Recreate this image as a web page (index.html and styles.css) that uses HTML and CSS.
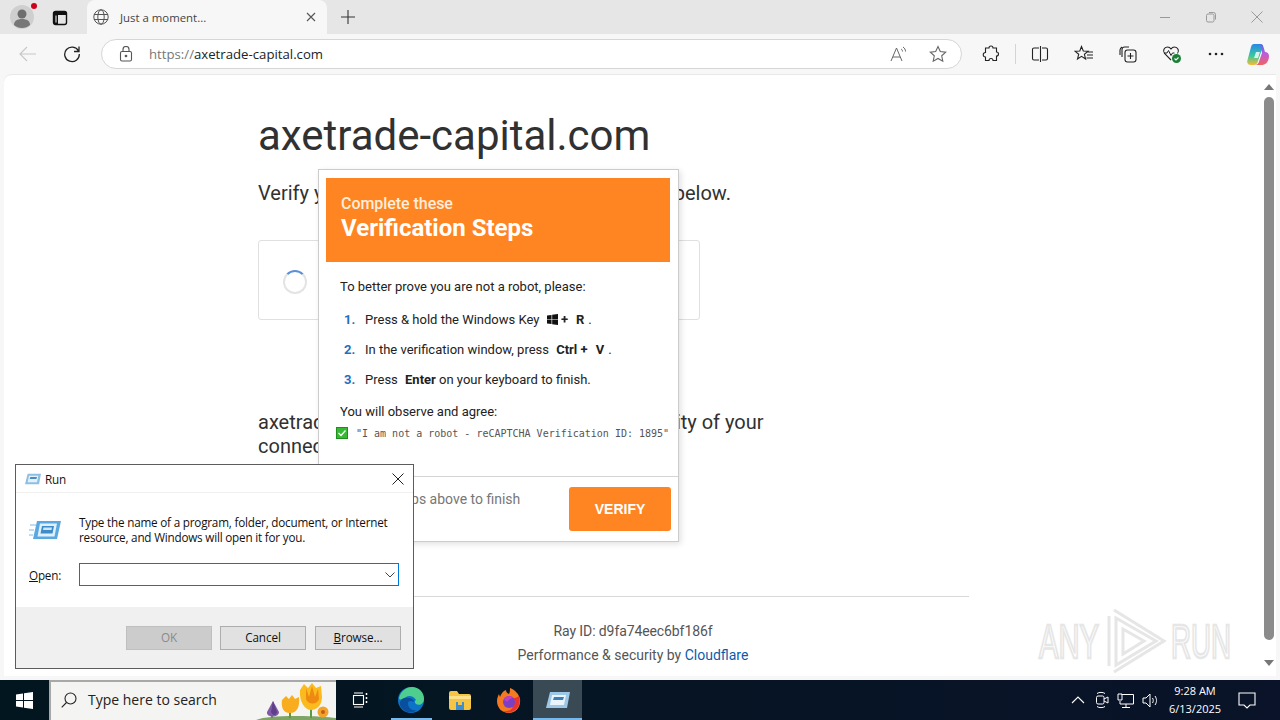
FILE: index.html
```html
<!DOCTYPE html>
<html lang="en">

<head>
    <meta charset="UTF-8">
    <title>Just a moment...</title>
    <link rel="stylesheet" href="styles.css">
</head>

<body>

    <div class="tab-strip">
        <div class="profile">
            <svg width="24" height="24" viewBox="0 0 24 24"><circle cx="12" cy="12" r="12" fill="#cfcfcf"/><circle cx="12" cy="9" r="4.5" fill="#6e6e6e"/><path d="M4 20c0-4 3-6 8-6s8 2 8 6c-2 2-5 3-8 3s-6-1-8-3z" fill="#777"/></svg>
            <span class="profile-dot"></span>
        </div>
        <div class="tab-actions">
            <svg width="16" height="16" viewBox="0 0 16 16"><rect x="1.5" y="1.5" width="13" height="13" rx="2" fill="none" stroke="#111" stroke-width="1.4"/><path d="M2 2h12v3H6v9H2z" fill="#111"/><rect x="3.5" y="5.5" width="1" height="7" fill="#fff"/></svg>
        </div>
        <div class="tab">
            <svg width="16" height="16" viewBox="0 0 16 16" fill="none" stroke="#555" stroke-width="1"><circle cx="8" cy="8" r="7.2"/><ellipse cx="8" cy="8" rx="3.2" ry="7.2"/><path d="M1 5.5h14M1 10.5h14"/></svg>
            <span class="tab-title">Just a moment...</span>
            <svg class="tab-close" width="10" height="10" viewBox="0 0 10 10" stroke="#555" stroke-width="1.1"><path d="M1 1l8 8M9 1l-8 8"/></svg>
        </div>
        <div class="new-tab">
            <svg width="16" height="16" viewBox="0 0 16 16" stroke="#333" stroke-width="1.1"><path d="M8 1v14M1 8h14"/></svg>
        </div>
        <div class="win-controls">
            <svg width="12" height="12" viewBox="0 0 12 12" stroke="#999"><path d="M1 6.5h10"/></svg>
            <svg width="12" height="12" viewBox="0 0 12 12" fill="none" stroke="#999"><rect x="1.5" y="3" width="7.5" height="8" rx="1.5"/><path d="M4 1.5h4.500a2 2 0 0 1 2 2v5"/></svg>
            <svg width="12" height="12" viewBox="0 0 12 12" stroke="#999"><path d="M.5.5l11 11M11.500.5l-11 11"/></svg>
        </div>
    </div>

    <div class="toolbar">
        <div class="tool">
            <svg width="18" height="18" viewBox="0 0 18 18" fill="none" stroke="#c8c8c8" stroke-width="1.200"><path d="M17 9H1M8 2L1 9l7 7"/></svg>
        </div>
        <div class="tool">
            <svg width="18" height="18" viewBox="0 0 18 18" fill="none" stroke="#222" stroke-width="1.300"><path d="M15.500 6A7.300 7.300 0 1 0 16.300 9M16 1.500V6.500H11"/></svg>
        </div>
        <div class="address-bar">
            <svg class="lock" width="14" height="16" viewBox="0 0 14 16" fill="none" stroke="#555" stroke-width="1.100"><rect x="1.500" y="5.500" width="11" height="9.500" rx="1.500"/><path d="M4 5.500V3.500a3 3 0 0 1 6 0v2"/><circle cx="7" cy="10" r=".8" fill="#555"/></svg>
            <span class="url"><span class="url-scheme">https://</span>axetrade-capital.com</span>
            <svg class="read-aloud" width="18" height="18" viewBox="0 0 18 18" fill="none" stroke="#666" stroke-width="1"><path d="M1 16L6.500 3 12 16M3 12h7"/><path d="M11 4c1 .5 1.500 1.200 1.500 2.500M13 2c1.500 1 2.500 2.500 2.500 4.500"/></svg>
            <svg width="18" height="18" viewBox="0 0 18 18" fill="none" stroke="#666" stroke-width="1.100"><path d="M9 1.500l2.300 5 5.400.6-4 3.700 1.100 5.400L9 13.500l-4.800 2.700 1.100-5.400-4-3.700 5.400-.6z"/></svg>
        </div>
        <div class="tool tool-ext">
            <svg width="18" height="18" viewBox="0 0 18 18" fill="none" stroke="#222" stroke-width="1.100"><path d="M7 3a2 2 0 0 1 4 0h3.500v4a2 2 0 0 1 0 4v4.500H11a2 2 0 0 0-4 0H3.500V12a2 2 0 0 1 0-4.500V3z"/></svg>
        </div>
        <span class="tool-sep"></span>
        <div class="tool">
            <svg width="18" height="18" viewBox="0 0 18 18" fill="none" stroke="#222" stroke-width="1.100"><path d="M8 3H3a1.500 1.500 0 0 0-1.500 1.500v9A1.500 1.500 0 0 0 3 15h5M11 3h4a1.500 1.500 0 0 1 1.500 1.500v9A1.500 1.500 0 0 1 15 15h-4M9.500 1v16"/></svg>
        </div>
        <div class="tool">
            <svg width="20" height="18" viewBox="0 0 20 18" fill="none" stroke="#222" stroke-width="1.100"><path d="M7.500 1.500l1.800 4.500 4.700.3-3.600 3 1.200 4.700-4.100-2.600-4 2.600 1.200-4.700-3.600-3 4.700-.3zM13 7h6M13 10h6M12.500 13h6.500"/></svg>
        </div>
        <div class="tool">
            <svg width="18" height="18" viewBox="0 0 18 18" fill="none" stroke="#222" stroke-width="1.100"><path d="M3 12V4.500A2.500 2.500 0 0 1 5.500 2H10M1 10V5a4 4 0 0 1 2-3"/><rect x="6" y="5" width="11" height="12" rx="2.500"/><path d="M11.500 8v6M8.500 11h6"/></svg>
        </div>
        <div class="tool">
            <svg width="20" height="20" viewBox="0 0 20 20" fill="none"><path d="M9 16L2.500 9.500C.5 7 2 3 5.500 3 7 3 8.200 3.800 9 5c.8-1.200 2-2 3.500-2 3.500 0 5 4 3 6.500" stroke="#222" stroke-width="1.100"/><path d="M2 9h3l1.500-2.500 2.500 5 1.500-2.500h2" stroke="#222" stroke-width="1"/><circle cx="14.500" cy="14.500" r="4.500" fill="#1a7f37"/><path d="M12.500 14.500l1.500 1.500 2.500-2.500" stroke="#fff" stroke-width="1.100"/></svg>
        </div>
        <div class="tool">
            <svg width="16" height="4" viewBox="0 0 16 4" fill="#222"><circle cx="2" cy="2" r="1.300"/><circle cx="8" cy="2" r="1.300"/><circle cx="14" cy="2" r="1.300"/></svg>
        </div>
        <div class="tool tool-copilot">
            <svg width="22" height="21" viewBox="0 0 22 21">
                <defs>
                    <linearGradient id="copilotLeft" x1="0" y1="0" x2="0" y2="1"><stop offset="0" stop-color="#2a86e8"/><stop offset=".55" stop-color="#36c8a0"/><stop offset="1" stop-color="#f7bb35"/></linearGradient>
                    <linearGradient id="copilotRight" x1="0" y1="0" x2="0" y2="1"><stop offset="0" stop-color="#4f6fe8"/><stop offset=".5" stop-color="#c45ad6"/><stop offset="1" stop-color="#f0645c"/></linearGradient>
                </defs>
                <path d="M7 0h6c2 0 3 1 3 2l-5 15c-.6 2.500-2 4-4.500 4H4c-3 0-4.500-2-3.500-5L4 3c.5-2 1.500-3 3-3z" fill="url(#copilotLeft)"/>
                <path d="M13 0c2 0 3 1 3.500 3L18 8c2 0 4 1.500 4 4 0 5-3 9-7 9H8c2 0 3.500-1.500 4-3.500l3-8.500z" fill="url(#copilotRight)"/>
                <path d="M9 8h4l-2 6H7z" fill="#fff" opacity=".8"/>
            </svg>
        </div>
    </div>

    <div class="viewport">
        <div class="page">
            <main class="page-main">
                <h1>axetrade-capital.com</h1>
                <p class="page-sub">Verify you are human by completing the action below.</p>
                <div class="turnstile"><span class="spinner"></span></div>
                <p class="page-note">axetrade-capital.com needs to review the security of your connection before proceeding.</p>
            </main>
            <footer class="page-footer">
                <div class="ray-id">Ray ID: d9fa74eec6bf186f</div>
                <div>Performance &amp; security by <span class="cf-link">Cloudflare</span></div>
            </footer>
        </div>
        <div class="scrollbar">
            <span class="arrow-up"></span>
            <span class="thumb"></span>
            <span class="arrow-down"></span>
        </div>
    </div>

    <div class="taskbar">
        <div class="start">
            <svg width="17" height="17" viewBox="0 0 17 17" fill="#fff"><path d="M0 2.400L7 1.400V8H0zM8 1.300L17 0V8H8zM0 9h7v6.600L0 14.600zM8 9h9v8L8 15.700z"/></svg>
        </div>
        <div class="search-box">
            <svg width="16" height="16" viewBox="0 0 16 16" fill="none" stroke="#222" stroke-width="1.100"><circle cx="9.500" cy="6.500" r="5.500"/><path d="M5.500 10.500L.7 15.300"/></svg>
            <span class="search-text">Type here to search</span>
            <svg class="search-art" width="80" height="38" viewBox="0 0 80 38">
                <path d="M0 38c8-3 20-4 40-4s32 1 40 2v2z" fill="#7fa565"/>
                <path d="M16 36v-6M34 36V26M55 36V24M67 35v-3" stroke="#5c9a44" stroke-width="2" fill="none"/>
                <path d="M17 19l-6 11c-1 6 12 6 12 0z" fill="#7f5aa8"/>
                <path d="M17 19l-2 11c2 4 5 4 6 0z" fill="#5f3f8a"/>
                <path d="M26 18l4-4 3 3 3-4 3 4 4-2c1 10-2 16-9 16s-9-6-8-13z" fill="#f8ad1f"/>
                <path d="M44 8l4-6 4 4 4-5 4 5 5-2 1 11c0 8-5 13-11 13s-12-8-11-20z" fill="#fbba1e"/>
                <path d="M50 6l3 9 3-11 3 11 3-8 1 10c-2 6-11 6-13 0z" fill="#ee8a12"/>
                <circle cx="67" cy="30" r="5.500" fill="#f0a52a"/>
                <circle cx="67" cy="30" r="2" fill="#c8591b"/>
            </svg>
        </div>
        <div class="task task-view">
            <svg width="16" height="16" viewBox="0 0 16 16" fill="none" stroke="#fff" stroke-width="1.100"><rect x="1.500" y="3.500" width="10" height="9"/><path d="M2 1h9M2 15h9"/><path d="M14.500 1v2M14.500 5v2M14.500 9v2" stroke-width="1.500"/></svg>
        </div>
        <div class="task task-open">
            <svg width="26" height="26" viewBox="0 0 26 26"><circle cx="13" cy="13" r="13" fill="#0c74c8"/><path d="M1 11C3 4 8 0 14 0c7 0 12 5 12 12 0 5-5 7-8 5-1-1-2-3 0-4-2-4-7-5-10-3-4 2-6 4-7 1z" fill="#4fcf8d"/><path d="M10 16c0 5 4 8 9 7-6 5-14 2-17-5-1-4 3-8 8-7 4 0 6 2 6 4-3-2-6-1-6 1z" fill="#0a4f9e"/></svg>
        </div>
        <div class="task task-folder">
            <svg width="22" height="20" viewBox="0 0 22 20"><path d="M0 3a2 2 0 0 1 2-2h6l2 3h10a2 2 0 0 1 2 2v12a2 2 0 0 1-2 2H2a2 2 0 0 1-2-2z" fill="#f6c544"/><rect x="0" y="6" width="22" height="3" fill="#fde08a"/><rect x="7" y="12" width="8" height="8" fill="#3d8fd1"/><rect x="9" y="12" width="4" height="3" fill="#f6c544"/></svg>
        </div>
        <div class="task task-firefox">
            <svg width="24" height="25" viewBox="0 0 24 25"><path d="M12 25C5 25 0 20 0 13c0-3 1-5 2-7l1 3c1-3 3-6 6-7 0 2 1 3 3 4 1-2 1-4 1-6 5 2 9 6 10 11 1 8-4 14-11 14z" fill="#f5791f"/><path d="M22 8c2 6 0 12-5 15-4 2-8 2-11 0 5 1 9-1 10-5 1-3-1-6-3-7 3-1 7-1 9-3z" fill="#e8342f"/><circle cx="12" cy="14" r="6" fill="#7a3fc2"/><path d="M7 11c2-3 6-4 9-2-1 2-4 2-5 4-1 1-3 0-4-2z" fill="#c13fc0"/></svg>
        </div>
        <div class="task task-active">
            <svg width="24" height="16" viewBox="0 0 24 16"><path d="M4 0h20l-3 16H0z" fill="#9cc7e6"/><path d="M6 3h14l-2 10H4z" fill="#e9f4fb"/><path d="M8 5h10l-1 3H7z" fill="#3f7fb3"/></svg>
        </div>
        <div class="tray">
            <svg class="tray-chev" width="14" height="8" viewBox="0 0 14 8" fill="none" stroke="#fff" stroke-width="1.100"><path d="M1 7l6-6 6 6"/></svg>
            <svg width="14" height="18" viewBox="0 0 14 18" fill="none" stroke="#fff" stroke-width="1"><rect x="1.500" y="5" width="7.500" height="8" rx="1.500"/><path d="M9 8l4-2v6l-4-2M2 2.500c2-1.500 6-1.500 8 0M2 15.500c2 1.500 6 1.500 8 0"/></svg>
            <svg width="17" height="15" viewBox="0 0 17 15" fill="none" stroke="#fff" stroke-width="1"><path d="M4.500 1.500H16.500V11H3V8M1 1h4v6H1zM9 11v3M5 14.500h8"/></svg>
            <svg width="17" height="15" viewBox="0 0 17 15" fill="none" stroke="#fff" stroke-width="1"><path d="M1 5h3l4-4v13l-4-4H1zM10.500 5c1 1.500 1 3.500 0 5M13 3c2 3 2 6 0 9"/></svg>
            <div class="clock"><span>9:28 AM</span><span>6/13/2025</span></div>
            <svg class="tray-notify" width="18" height="17" viewBox="0 0 18 17" fill="none" stroke="#fff" stroke-width="1.100"><path d="M1 1h16v12h-5l-3 3-3-3H1z"/></svg>
        </div>
    </div>

    <!-- floating stuff on top of the page -->
    <div class="captcha-popup">
        <div class="captcha-head">
            <div class="captcha-head-small">Complete these</div>
            <div class="captcha-head-big">Verification Steps</div>
        </div>
        <div class="captcha-body">
            <p class="captcha-intro">To better prove you are not a robot, please:</p>
            <div class="step"><span class="step-num">1.</span>Press &amp; hold the Windows Key
                <svg class="win-key" width="11" height="11" viewBox="0 0 17 17" fill="#111"><path d="M0 2.400L7 1.400V8H0zM8 1.300L17 0V8H8zM0 9h7v6.600L0 14.600zM8 9h9v8L8 15.700z"/></svg>
                <b class="key-plus">+</b><b class="key">R</b><span class="key-dot">.</span></div>
            <div class="step"><span class="step-num">2.</span>In the verification window, press
                <b class="key-ctrl">Ctrl +</b><b class="key">V</b><span class="key-dot">.</span></div>
            <div class="step"><span class="step-num">3.</span>Press <b class="key-enter">Enter</b> on your keyboard to finish.</div>
            <p class="captcha-observe">You will observe and agree:</p>
            <div class="observe-row">
                <svg width="12" height="12" viewBox="0 0 12 12"><rect width="12" height="12" fill="#1f8f1f"/><rect x="1" y="1" width="10" height="10" fill="#37b934"/><path d="M2.500 6l2.500 2.500 4.500-5" fill="none" stroke="#fff" stroke-width="1.300"/></svg>
                <code>"I am not a robot - reCAPTCHA Verification ID: 1895"</code>
            </div>
        </div>
        <div class="captcha-foot">
            <span class="foot-text">Do the steps above to finish</span>
            <button class="verify-btn">VERIFY</button>
        </div>
    </div>

    <div class="run-dialog">
        <div class="run-title">
            <svg width="16" height="12" viewBox="0 0 24 16"><path d="M4 0h20l-3 16H0z" fill="#8cbfe3"/><path d="M6 3h14l-2 10H4z" fill="#e3f1fa"/><path d="M8 5h10l-1 3H7z" fill="#4a8cc0"/></svg>
            <span>Run</span>
            <svg class="run-close" width="12" height="12" viewBox="0 0 12 12" stroke="#222" stroke-width="1"><path d="M.5.5l11 11M11.500.5l-11 11"/></svg>
        </div>
        <div class="run-body">
            <div class="run-desc">
                <svg width="32" height="20" viewBox="0 0 32 20"><path d="M8 1h24l-4 18H4z" fill="#5aa8e0"/><path d="M11 3.500h17l-2.500 13H8.500z" fill="#dff0fb"/><path d="M13 6h12l-1.500 7.500h-12z" fill="#3d8cc7"/><path d="M14.500 7.500h8.500l-.5 2.500h-8.500z" fill="#cfe6f6"/><path d="M1 5h6M0 10h5M0 15h4" stroke="#7dbbe6" stroke-width="1.200"/></svg>
                <p>Type the name of a program, folder, document, or Internet resource, and Windows will open it for you.</p>
            </div>
            <div class="run-open">
                <label><u>O</u>pen:</label>
                <div class="run-combo">
                    <svg width="10" height="6" viewBox="0 0 10 6" fill="none" stroke="#444"><path d="M.5.500L5 5 9.500.5"/></svg>
                </div>
            </div>
        </div>
        <div class="run-foot">
            <button class="run-btn" disabled>OK</button>
            <button class="run-btn run-cancel">Cancel</button>
            <button class="run-btn"><u>B</u>rowse...</button>
        </div>
    </div>

    <svg class="watermark" width="198" height="66" viewBox="0 0 198 66">
        <g fill="#fff" stroke="#e6e6e6" stroke-width="2.500" font-family="Liberation Sans, sans-serif" font-size="48">
            <text x="3" y="50" textLength="60" lengthAdjust="spacingAndGlyphs">ANY</text>
            <text x="135" y="50" textLength="60" lengthAdjust="spacingAndGlyphs">RUN</text>
        </g>
        <g fill="none" stroke="#e6e6e6" stroke-width="3">
            <path d="M73 8v50M80 10l40 23-40 24z"/>
            <path d="M87 21l21 12-21 13z"/>
            <path d="M78 2l50 31-50 31"/>
        </g>
    </svg>

</body>

</html>
```
FILE: styles.css
```css
html,
body {
    margin: 0;
    padding: 0;
    height: 720px;
    overflow: hidden;
}

body {
    width: 1280px;
    display: flex;
    flex-direction: column;
    font-family: "Open Sans", sans-serif;
    background-color: #f7f7f7;
    position: relative;
}

p {
    margin: 0;
}

/* browser chrome */
.tab-strip {
    height: 34px;
    flex: none;
    display: flex;
    align-items: center;
    background-color: #e6e6e6;
}

.profile {
    width: 24px;
    height: 24px;
    margin-left: 10px;
    position: relative;
}

.profile svg {
    display: block;
}

.profile-dot {
    position: absolute;
    top: -2px;
    right: -3px;
    width: 6px;
    height: 6px;
    border-radius: 50%;
    background-color: #d0021b;
}

.tab-actions {
    margin-left: 18px;
    width: 16px;
    height: 16px;
}

.tab {
    margin-left: 19px;
    width: 240px;
    height: 34px;
    box-sizing: border-box;
    padding: 0 11px 0 6px;
    display: flex;
    align-items: center;
    background-color: #f7f7f7;
    border-radius: 8px 8px 0 0;
}

.tab-title {
    margin-left: 11px;
    font-size: 11.400px;
    color: #444;
    flex: 1;
}

.new-tab {
    margin-left: 13px;
    height: 16px;
    margin-top: -2px;
}

.win-controls {
    margin-left: auto;
    display: flex;
    gap: 34px;
    padding-right: 17px;
}

.toolbar {
    height: 40px;
    flex: none;
    box-sizing: border-box;
    padding-left: 12px;
    display: flex;
    align-items: center;
    gap: 12px;
    background-color: #f7f7f7;
}

.tool {
    width: 32px;
    height: 30px;
    display: flex;
    align-items: center;
    justify-content: center;
}

.tool-ext {
    margin-left: 1px;
}

.tool-copilot {
    margin-left: -2px;
}

.tool-sep {
    width: 1px;
    height: 20px;
    margin: 0 -4px;
    background-color: #d4d4d4;
}

.address-bar {
    width: 861px;
    height: 30px;
    margin-left: 1px;
    box-sizing: border-box;
    padding: 0 14px 0 17px;
    display: flex;
    align-items: center;
    background-color: #fff;
    border: 1px solid #d6d6d6;
    border-radius: 15px;
}

.url {
    margin-left: 16px;
    flex: 1;
    font-size: 13.200px;
    color: #222;
}

.url-scheme {
    color: #777;
}

.read-aloud {
    margin-right: 21px;
}

/* the web page */
.viewport {
    flex: 1;
    display: flex;
    margin: 0 4px 4px;
    min-height: 0;
    background-color: #fff;
    border-top: 1px solid #e8e8e8;
    border-top-left-radius: 8px;
}

.page {
    flex: 1;
    color: #313131;
    font-family: Roboto, sans-serif;
}

.page-main {
    width: 750px;
    margin: 0 auto;
    padding-top: 36px;
}

h1 {
    margin: 0;
    font-size: 42px;
    font-weight: 400;
    line-height: 50px;
}

.page-sub {
    margin-top: 17px;
    font-size: 20px;
    line-height: 30px;
}

.turnstile {
    margin-top: 32px;
    width: 442px;
    height: 80px;
    box-sizing: border-box;
    border: 1px solid #e0e0e0;
    border-radius: 3px;
    display: flex;
    align-items: center;
    padding-left: 24px;
}

.spinner {
    width: 24px;
    height: 24px;
    box-sizing: border-box;
    border: 2px solid #e4e4e4;
    border-top-color: #5b8fd6;
    border-radius: 50%;
    margin-top: 3px;
}

.page-note {
    margin-top: 90px;
    width: 510px;
    font-size: 20px;
    line-height: 24px;
}

.page-footer {
    width: 672px;
    margin: 138px auto 0;
    padding-top: 22px;
    border-top: 1px solid #d9d9d9;
    text-align: center;
    font-size: 14px;
    line-height: 24px;
    color: #555;
}

.ray-id {
    letter-spacing: -0.1px;
}

.cf-link {
    color: #0b5cad;
}

.scrollbar {
    width: 14px;
    flex: none;
    position: relative;
    display: flex;
    flex-direction: column;
    align-items: center;
}

.arrow-up,
.arrow-down {
    width: 0;
    height: 0;
    border-left: 5px solid transparent;
    border-right: 5px solid transparent;
}

.arrow-up {
    margin-top: 9px;
    border-bottom: 6px solid #777;
}

.arrow-down {
    margin-top: 20px;
    border-top: 6px solid #777;
}

.thumb {
    width: 10px;
    height: 543px;
    margin-top: 7px;
    border-radius: 5px;
    background-color: #8b8b8b;
}

/* windows taskbar */
.taskbar {
    height: 40px;
    flex: none;
    display: flex;
    background: linear-gradient(90deg, #02161f, #0a1329);
}

.start {
    width: 49px;
    display: flex;
    align-items: center;
    justify-content: center;
    box-sizing: border-box;
}

.search-box {
    width: 287px;
    box-sizing: border-box;
    border: 2px solid #a8a8a8;
    border-bottom: 0;
    border-right: 0;
    background-color: #f4f4f2;
    display: flex;
    align-items: center;
    padding: 0 0 3px 10px;
    position: relative;
    overflow: hidden;
}

.search-text {
    margin-left: 11px;
    font-size: 14px;
    color: #222;
}

.search-art {
    position: absolute;
    right: 0;
    top: 0;
}

.task {
    width: 50px;
    display: flex;
    align-items: center;
    justify-content: center;
    box-sizing: border-box;
}

.task-view {
    margin-left: -1px;
}

.task-open {
    margin-left: 1px;
    background: linear-gradient(#76b9ed, #76b9ed) center bottom / 41px 2px no-repeat;
}

.task-folder {
    margin-left: -1px;
}

.task-firefox {
    margin-left: -1px;
}

.task-active {
    width: 49px;
    margin-left: -1px;
    background-color: #3a4a55;
    box-shadow: inset 0 -2px 0 #76b9ed;
}

.tray {
    margin-left: auto;
    display: flex;
    align-items: center;
    color: #fff;
    gap: 8px;
    padding-right: 24px;
}

.tray-chev {
    margin-right: 2px;
}

.clock {
    display: flex;
    flex-direction: column;
    align-items: center;
    width: 52px;
    font-size: 11px;
    line-height: 18px;
    margin-left: 2px;
}

.tray-notify {
    margin-left: 9px;
}

/* fake captcha popup */
.captcha-popup {
    position: absolute;
    left: 318px;
    top: 169px;
    width: 361px;
    height: 373px;
    box-sizing: border-box;
    padding-top: 8px;
    background-color: #fff;
    border: 1px solid #ccc;
    box-shadow: 2px 2px 6px rgba(0, 0, 0, 0.12);
    display: flex;
    flex-direction: column;
    font-family: Roboto, sans-serif;
    color: #222;
}

.captcha-head {
    margin: 0 8px 0 7px;
    height: 84px;
    box-sizing: border-box;
    padding: 16px 15px 0;
    background-color: #ff8522;
    color: #fff;
}

.captcha-head-small {
    font-size: 16px;
    font-weight: 500;
    line-height: 19px;
    color: #ffeedd;
    letter-spacing: -0.05px;
}

.captcha-head-big {
    font-size: 24px;
    font-weight: 700;
    line-height: 30px;
}

.captcha-body {
    flex: 1;
    padding: 17px 8px 0 17px;
    font-size: 13px;
    position: relative;
}

.captcha-intro {
    line-height: 16px;
    margin-left: 4px;
    margin-bottom: 17px;
}

.step {
    height: 30px;
    line-height: 16px;
    display: block;
    margin-left: 8px;
    font-size: 13px;
}

.step-num {
    display: inline-block;
    width: 21px;
    color: #1f6fc0;
    font-weight: 700;
}

.step b {
    font-weight: 700;
}

.win-key {
    margin-left: 4px;
    vertical-align: -1px;
}

.key-plus {
    margin-left: 0;
}

.key {
    margin-left: 8px;
}

.key-dot {
    margin-left: 4px;
}

.key-ctrl {
    margin-left: 4px;
}

.key-enter {
    margin-left: 4px;
}

.captcha-observe {
    line-height: 16px;
    margin-left: 4px;
    margin-top: 2px;
}

.observe-row {
    display: flex;
    align-items: center;
    margin: 7px 0 0;
    gap: 8px;
}

.observe-row code {
    font-family: "DejaVu Sans Mono", monospace;
    font-size: 10px;
    color: #555;
    white-space: nowrap;
}

.captcha-foot {
    height: 65px;
    flex: none;
    box-sizing: border-box;
    border-top: 1px solid #d4d4d4;
    padding: 10px 7px 0 29px;
    display: flex;
    justify-content: space-between;
    align-items: flex-start;
}

.foot-text {
    font-size: 14px;
    line-height: 24px;
    color: #777;
}

.verify-btn {
    width: 102px;
    height: 44px;
    border: none;
    border-radius: 3px;
    background-color: #ff8522;
    color: #fff;
    font-family: "Liberation Sans", sans-serif;
    font-size: 14px;
    font-weight: 700;
}

/* run dialog */
.run-dialog {
    position: absolute;
    left: 15px;
    top: 464px;
    width: 399px;
    height: 205px;
    box-sizing: border-box;
    border: 1px solid #5c5c5c;
    background-color: #fff;
    display: flex;
    flex-direction: column;
    font-size: 11.700px;
    letter-spacing: -0.2px;
    color: #111;
}

.run-title {
    height: 27px;
    flex: none;
    display: flex;
    align-items: center;
    gap: 4px;
    padding: 0 9px 0 9px;
    border-bottom: 1px solid #f0f0f0;
}

.run-close {
    margin-left: auto;
}

.run-body {
    flex: 1;
    padding: 22px 14px 0 13px;
}

.run-desc {
    display: flex;
    gap: 18px;
    align-items: center;
}

.run-desc p {
    width: 315px;
    line-height: 15px;
}

.run-open {
    display: flex;
    align-items: center;
    margin-top: 18px;
}

.run-open label {
    width: 50px;
}

.run-combo {
    width: 320px;
    height: 23px;
    box-sizing: border-box;
    border: 1px solid #0078d7;
    display: flex;
    align-items: center;
    justify-content: flex-end;
    padding-right: 3px;
}

.run-foot {
    height: 61px;
    flex: none;
    box-sizing: border-box;
    padding: 19px 12px 0 0;
    display: flex;
    justify-content: flex-end;
    gap: 8px;
    background-color: #f0f0f0;
}

.run-btn {
    width: 86px;
    height: 24px;
    padding: 0 0 2px;
    border: 1px solid #adadad;
    background-color: #e1e1e1;
    font-family: "Open Sans", sans-serif;
    font-size: 11.700px;
    letter-spacing: -0.1px;
    color: #111;
}

.run-cancel {
    margin-right: 1px;
}

.run-btn:disabled {
    background-color: #ccc;
    border-color: #bfbfbf;
    color: #8a8a8a;
}

.watermark {
    position: absolute;
    left: 1036px;
    top: 608px;
}
```
